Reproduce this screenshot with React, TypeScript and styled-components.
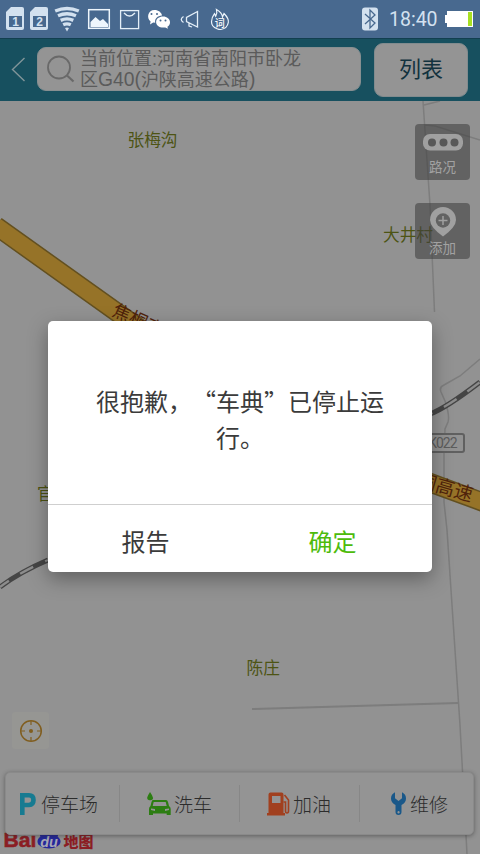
import React from "react";
import styled, { createGlobalStyle } from "styled-components";

const Global = createGlobalStyle`
  * { box-sizing: border-box; }
  body { margin: 0; background: #929292; font-family: "Noto Sans CJK SC", sans-serif; }
  button { font-family: inherit; border: 0; padding: 0; margin: 0; }
  svg { display: block; flex: none; }
`;

const Screen = styled.div`
  position: relative;
  width: 480px;
  height: 854px;
  display: flex;
  flex-direction: column;
  overflow: hidden;
`;

const StatusBar = styled.div`
  height: 38px;
  flex: none;
  display: flex;
  justify-content: space-between;
  background: #48698f;
`;

const StatusRight = styled.div`
  display: flex;
  align-items: center;
  padding-right: 7px;
`;

const Clock = styled.span`
  font: 19.5px/38px Roboto, sans-serif;
  color: #d3e1f0;
  width: 49px;
  white-space: nowrap;
  padding-top: 1px;
  margin: 0 7px 0 11px;
`;

const Header = styled.div`
  height: 63px;
  flex: none;
  display: flex;
  align-items: flex-start;
  background: #17505f;
  border-top: 1px solid #123f50;
`;

const Back = styled.div`
  width: 37px;
  padding: 18px 0 0 11px;
`;

const SearchBox = styled.div`
  width: 324px;
  height: 44px;
  margin-top: 8px;
  border-radius: 9px;
  background: #949494;
  border: 1px solid #878f91;
  display: flex;
  padding: 7px 0 0 9px;
`;

const Address = styled.div`
  margin: -6px 0 0 5px;
  font-size: 18px;
  line-height: 21px;
  font-family: "Liberation Sans", "Noto Sans CJK SC", sans-serif;
  color: #5b5b5b;
  white-space: nowrap;
`;

const Latin = styled.span`
  font-size: 19.3px;
  line-height: 1;
`;

const ListButton = styled.button`
  width: 94px;
  height: 54px;
  margin: 4px 0 0 13px;
  border-radius: 9px;
  background: #949494;
  border: 1px solid #818b8e;
  color: #12323e;
  font-size: 22px;
  line-height: 46px;
  padding-bottom: 6px;
`;

const MapArea = styled.div`
  position: relative;
  flex: 1;
  background: #929292;
`;

const MapTools = styled.div`
  position: absolute;
  top: 23px;
  right: 10px;
  display: flex;
  flex-direction: column;
  gap: 23px;
`;

const MapTool = styled.div`
  width: 55px;
  height: 56px;
  border-radius: 4px;
  background: rgba(64, 64, 64, 0.58);
  display: flex;
  flex-direction: column;
  align-items: center;
  justify-content: space-between;
  color: #a2a2a2;
  font-size: 13.5px;
  line-height: 20px;
  padding: 4px 0 5px;
`;

const Locate = styled.div`
  position: absolute;
  left: 12px;
  top: 611px;
  width: 37px;
  height: 37px;
  border-radius: 3px;
  background: #969693;
  display: flex;
  align-items: center;
  justify-content: center;
`;

const Services = styled.div`
  position: absolute;
  left: 5px;
  top: 671px;
  width: 469px;
  height: 63px;
  border-radius: 5px;
  background: #949494;
  border: 1px solid #8a8a8a;
  box-shadow: 0 1px 4px rgba(30, 30, 30, 0.45);
  display: flex;
`;

const Service = styled.div<{ $width: number; $start: number; $gap: number }>`
  flex: 0 0 ${(p) => p.$width}px;
  display: flex;
  align-items: center;
  gap: ${(p) => p.$gap}px;
  padding-left: ${(p) => p.$start}px;
  position: relative;
  font-size: 19px;
  line-height: 28px;
  font-weight: 300;
  color: #2c2c2c;
  white-space: nowrap;
`;

const Divider = styled.div`
  width: 1px;
  height: 37px;
  flex: none;
  align-self: center;
  background: #878787;
`;

const Dialog = styled.div`
  position: absolute;
  left: 48px;
  top: 321px;
  width: 384px;
  height: 251px;
  border-radius: 5px;
  background: #fff;
  box-shadow: 0 7px 20px rgba(0, 0, 0, 0.34);
  display: flex;
  flex-direction: column;
`;

const Message = styled.div`
  height: 183px;
  padding-top: 62px;
  text-align: center;
  font-size: 24px;
  line-height: 36px;
  color: #3b3b3b;
  white-space: nowrap;
`;

const Cell = styled.span<{ $align: string }>`
  display: inline-block;
  width: 24px;
  text-align: ${(p) => p.$align};
`;

const Actions = styled.div`
  flex: 1;
  display: flex;
  border-top: 1px solid #cfcfcf;
`;

const Action = styled.button<{ $primary?: boolean }>`
  flex: 1;
  background: none;
  font-size: 24px;
  line-height: 62px;
  padding: ${(p) => (p.$primary ? "4px 6px 0 0" : "4px 0 0 4px")};
  color: ${(p) => (p.$primary ? "#4dbb0b" : "#3b3b3b")};
`;

const StatusIcons = () => (
  <svg width="240" height="38" viewBox="0 0 240 38">
    {[6, 30].map((x, i) => (
      <g key={x}>
        <path d={`M${x + 5} 7h11a2 2 0 0 1 2 2v19a2 2 0 0 1-2 2h-14a2 2 0 0 1-2-2V12z`} fill="#d3e1ef" />
        <rect x={x + 3} y="16" width="13" height="11" fill="#48698f" />
        <text x={x + 9.5} y="26" textAnchor="middle" fontSize="12" fontWeight="700" fontFamily="Liberation Sans" fill="#d3e1ef">{i + 1}</text>
      </g>
    ))}
    <g fill="none" stroke="#d3e1ef" strokeWidth="3.400">
      <path d="M55.200 11q11.800-5 23.600 0" />
      <path d="M58 15.800q9-4 18 0" />
      <path d="M60.700 20.400q6.300-3 12.600 0" />
      <path d="M63.200 24.800q3.800-1.800 7.600 0" />
    </g>
    <path d="M65 28q2-.8 4 0L67 31.500z" fill="#d3e1ef" />
    <rect x="88.700" y="9.700" width="20.600" height="18.600" fill="none" stroke="#eef6fc" strokeWidth="1.500" />
    <path d="M90.500 27v-5l5-5 4.500 4 3-2 5 5v3z" fill="#eef6fc" />
    <rect x="120.600" y="10.600" width="18" height="18" fill="none" stroke="#e4eff8" strokeWidth="1.300" />
    <path d="M124 13q5.500 6 11 0" fill="none" stroke="#e4eff8" strokeWidth="1.300" />
    <path d="M154.500 10c4 0 7 2.400 7.500 5.500-4.500.3-7.500 3-6.800 7.200l-2-.2-3.200 2 .6-3c-4.500-3.500-2.700-11.500 3.900-11.500z" fill="#fff" />
    <path d="M163 16.500c4 0 7 2.500 7 5.700 0 2-1 3.500-2.600 4.500l.5 2-2.600-1.300c-5 1-9.200-1.700-9.200-5.200s3-5.700 6.900-5.700z" fill="#fff" />
    <g fill="#48698f">
      <circle cx="151.500" cy="14" r="1" /><circle cx="157" cy="14" r="1" />
      <circle cx="160.500" cy="20.500" r="1" /><circle cx="165.500" cy="20.500" r="1" />
    </g>
    <path d="M197.500 11.500v15.500l-11-5.500v-4zM183.500 16.500q-4.500 3 0 6M189 23v3l3 1" fill="none" stroke="#e4eff8" strokeWidth="1.300" />
    <path d="M217 28.700q-5.500-2-5.500-7 0-4 3-8l1.200 2.500Q217.500 13 216.500 9.500q5.500 3 6 7.500l1.500-3.500q5 5 4.300 9-1 6-7.500 7-2 0-3.800-.8" fill="none" stroke="#edf5fc" strokeWidth="1.200" />
    <text x="214.800" y="26.500" fontSize="10" fontWeight="500" fill="#fff" fontFamily="Noto Sans CJK SC">词</text>
  </svg>
);

const MapDrawing = () => (
  <svg width="480" height="753" viewBox="0 101 480 753" fontFamily="Noto Sans CJK SC">
    <g fill="none" stroke="#7d7d7d" strokeWidth="1.500">
      <path d="M423 101L430 205 434.500 312M424 105l16-4M425 125l10 1 45 14" />
      <path d="M480 359l-20 17-16 9q-5 2-3 7l4 9q5 15 3 21l-3 7-1 25v48L447 530l13 195 7 129" />
      <path d="M252 709l206-6" strokeWidth="2" />
    </g>
    <g fill="none">
      <path d="M430 414Q446 408 480 382M48 560Q20 572 0 587" stroke="#454545" strokeWidth="5" />
      <path d="M430 414Q446 408 480 382M48 560Q20 572 0 587" stroke="#8c8c8c" strokeWidth="2.400" strokeDasharray="15 13" strokeDashoffset="12" />
    </g>
    <path d="M-4 226L160 343 M420 479L484 502.500" stroke="#635020" strokeWidth="19.500" />
    <path d="M-4 226L160 343 M420 479L484 502.500" stroke="#967328" strokeWidth="16.500" />
    <g fontSize="18" fill="#50230b">
      <text transform="translate(111 315) rotate(24)">焦桐高速</text>
      <text transform="translate(416 486) rotate(16)" fontSize="19">桐高速</text>
    </g>
    <rect x="400" y="434" width="64" height="18" rx="2" fill="#929292" stroke="#606060" strokeWidth="2" />
    <text x="457.500" y="448" textAnchor="end" fontSize="14" fill="#5c5c5c" fontFamily="Roboto" textLength="37">XK022</text>
    <g fontSize="16.700" fill="#4d5414">
      <text x="127.500" y="146">张梅沟</text>
      <text x="383" y="240.500">大井村</text>
      <text x="37" y="500">官庄</text>
      <text x="246.500" y="674">陈庄</text>
    </g>
    <text x="3.500" y="847" fontSize="20" fontWeight="700" fill="#8b1e24" stroke="#8b1e24" strokeWidth=".5" fontFamily="Liberation Sans" textLength="33" lengthAdjust="spacingAndGlyphs">Bai</text>
    <ellipse cx="49" cy="841.500" rx="11.500" ry="7" fill="#25289a" />
    <g fill="#25289a"><circle cx="43" cy="835" r="3" /><circle cx="55" cy="835" r="3" /></g>
    <text x="49" y="846.500" fontSize="14.500" fontWeight="700" fontStyle="italic" textAnchor="middle" fill="#a7a7b5" fontFamily="Liberation Sans">du</text>
    <text x="63.500" y="846.500" fontSize="15" fontWeight="900" fill="#8b1e24">地图</text>
  </svg>
);

const WashIcon = () => (
  <svg width="24" height="24" viewBox="0 0 24 24">
    <path d="M3 0q5 7 1.500 8Q0 9 .2 5.500Q1 3 3 0z" fill="#2c7d12" />
    <path fillRule="evenodd" fill="#2c7d12" d="M6 8h13q1.500 0 2 2l1 4q1.700 1 1.700 3v6h-4v-1.500H6V23H2v-6q0-2 1.500-3l1-4q.5-2 1.500-2zm.7 2-1 4h14l-1-4zM4 16.500v1.500l4 1v-2zm18 0-4 .5v2l4-1z" />
  </svg>
);

const FuelIcon = () => (
  <svg width="23" height="24" viewBox="0 0 23 24">
    <path fill="#a1401f" fillRule="evenodd" d="M3.500.500h11q2 0 2 2V21h1.500v2.500H0V21h1.500V2.500q0-2 2-2zM5 4v7h8.500V4z" />
    <path d="M16.500 10h2v9q0 2 1.500 2t1.500-2V8l-4-5" fill="none" stroke="#a1401f" strokeWidth="1.600" />
  </svg>
);

const RepairIcon = () => (
  <svg width="15" height="23" viewBox="0 0 15 23">
    <path fill="#1a5889" fillRule="evenodd" d="M4 .3v6L7.500 9 11 6.300v-6q4 2 4 6.200 0 4-4.500 6.500V20q0 3-3 3t-3-3v-7Q0 10.500 0 6.500 0 2.300 4 .3zM7.500 19a1.200 1.200 0 1 0 .1 0z" />
  </svg>
);

export default function App() {
  return (
    <>
      <Global />
      <Screen>
        <StatusBar>
          <StatusIcons />
          <StatusRight>
            <svg width="16" height="24" viewBox="0 0 16 24">
              <rect y=".5" width="16" height="23" rx="3" fill="#d3e1ef" />
              <path d="M3 7l10 9-5 5V3l5 5-10 9" fill="none" stroke="#48698f" strokeWidth="1.300" />
            </svg>
            <Clock>18:40</Clock>
            <svg width="28" height="18" viewBox="0 0 28 18">
              <path d="M2 1h26v16H2v-4H0V5h2z" fill="#fff" />
              <rect x="23" y="2" width="4" height="14" fill="#a8e022" />
            </svg>
          </StatusRight>
        </StatusBar>
        <Header>
          <Back>
            <svg width="15" height="25" viewBox="0 0 15 25">
              <path d="M13.500 1L1.500 12.500l12 11.500" fill="none" stroke="#809599" strokeWidth="1.400" />
            </svg>
          </Back>
          <SearchBox>
            <svg width="28" height="28" viewBox="0 0 28 28">
              <circle cx="12" cy="12.500" r="11" fill="none" stroke="#696969" strokeWidth="1.800" />
              <path d="M20 20.500l6.500 6" stroke="#696969" strokeWidth="2.200" />
            </svg>
            <Address>
              当前位置:河南省南阳市卧龙
              <br />
              区<Latin>G40(</Latin>沪陕高速公路<Latin>)</Latin>
            </Address>
          </SearchBox>
          <ListButton>列表</ListButton>
        </Header>
        <MapArea>
          <MapDrawing />
          <MapTools>
            <MapTool>
              <svg width="42" height="28" viewBox="0 0 42 28">
                <rect x="1" y="6" width="40" height="16.500" rx="7" fill="#a0a0a0" />
                <g fill="#585858"><circle cx="10" cy="14.500" r="4" /><circle cx="21.500" cy="14.500" r="4" /><circle cx="32.500" cy="14.500" r="4" /></g>
              </svg>
              路况
            </MapTool>
            <MapTool>
              <svg width="28" height="30" viewBox="0 0 28 30">
                <path d="M14 29.500Q1 20 1 13a13 13 0 0 1 26 0q0 7-13 16.500z" fill="#a0a0a0" />
                <circle cx="14" cy="13.500" r="7.200" fill="#626262" />
                <path d="M9.500 13.500h9M14 9v9" stroke="#a0a0a0" strokeWidth="1.500" />
              </svg>
              添加
            </MapTool>
          </MapTools>
          <Locate>
            <svg width="24" height="24" viewBox="0 0 24 24">
              <circle cx="12" cy="12" r="10.300" fill="none" stroke="#805e20" strokeWidth="1.500" />
              <circle cx="12" cy="12" r="2" fill="#805e20" />
              <path d="M12 2v4M12 18v4M2 12h4M18 12h4" stroke="#805e20" strokeWidth="1.200" />
            </svg>
          </Locate>
          <Services>
            <Service $width={113} $start={14} $gap={5}>
              <svg width="16" height="22" viewBox="0 0 16 22">
                <path d="M2.300 22V2.300H9q4.500 0 4.500 4.700T9 12H2.300" fill="none" stroke="#177b91" strokeWidth="4.600" />
              </svg>
              停车场
            </Service>
            <Divider />
            <Service $width={119} $start={27} $gap={3}>
              <WashIcon />
              洗车
            </Service>
            <Divider />
            <Service $width={119} $start={27} $gap={3}>
              <FuelIcon />
              加油
            </Service>
            <Divider />
            <Service $width={113} $start={31} $gap={4}>
              <RepairIcon />
              维修
            </Service>
          </Services>
        </MapArea>
        <Dialog>
          <Message>
            很抱歉，<Cell $align="right">“</Cell>车典<Cell $align="left">”</Cell>已停止运
            <br />
            行。
          </Message>
          <Actions>
            <Action>报告</Action>
            <Action $primary>确定</Action>
          </Actions>
        </Dialog>
      </Screen>
    </>
  );
}
